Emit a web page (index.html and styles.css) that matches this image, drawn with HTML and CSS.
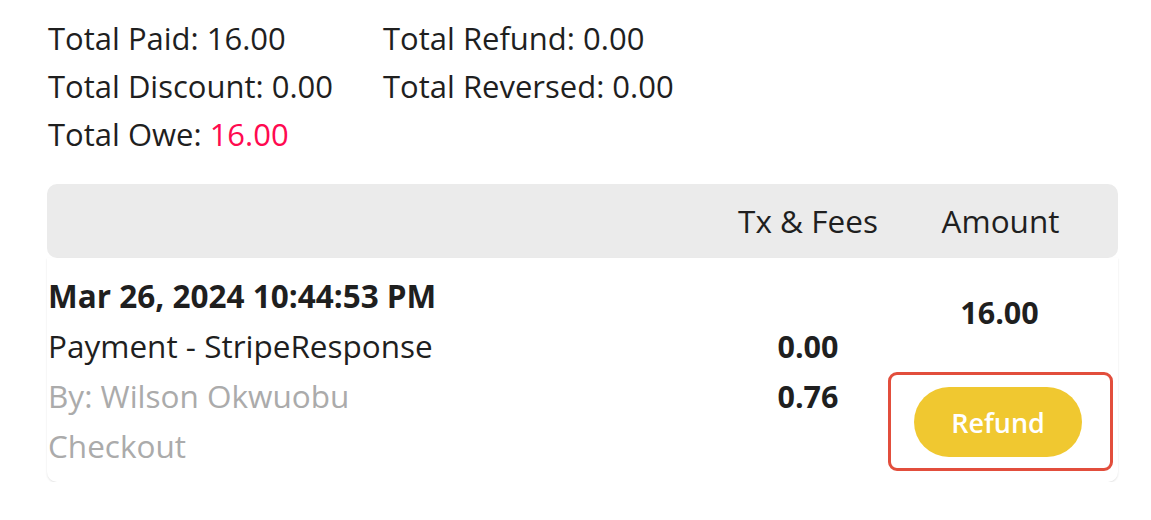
FILE: index.html
```html
<!DOCTYPE html>
<html>
<head>
<meta charset="utf-8">
<link rel="stylesheet" href="styles.css">
</head>
<body>
<div class="page">
  <div class="summary">
    <div class="item">Total Paid: 16.00</div>
    <div class="item">Total Refund: 0.00</div>
    <div class="item">Total Discount: 0.00</div>
    <div class="item">Total Reversed: 0.00</div>
    <div class="item">Total Owe: <span class="owe">16.00</span></div>
  </div>

  <div class="table">
    <div class="thead">
      <div class="th-desc"></div>
      <div class="th">Tx &amp; Fees</div>
      <div class="th">Amount</div>
    </div>
    <div class="trow">
      <div class="desc">
        <div class="date">Mar 26, 2024 10:44:53 PM</div>
        <div class="line">Payment - StripeResponse</div>
        <div class="line muted">By: Wilson Okwuobu</div>
        <div class="line muted">Checkout</div>
      </div>
      <div class="fees">
        <div class="num">0.00</div>
        <div class="num">0.76</div>
      </div>
      <div class="amount">
        <div class="num amt">16.00</div>
        <div class="action-box">
          <button class="refund">Refund</button>
        </div>
      </div>
    </div>
  </div>
</div>
</body>
</html>
```

FILE: styles.css
```css
html, body {
  margin: 0;
  padding: 0;
  background: #ffffff;
}

body {
  font-family: "Open Sans", "Noto Sans", sans-serif;
  color: #1f1f1f;
  font-size: 31px;
}

.page {
  padding: 14px 33px 0 47px;
}

.summary {
  display: grid;
  grid-template-columns: 335px auto;
  padding-left: 1px;
}

.item {
  line-height: 48px;
  height: 48px;
  white-space: nowrap;
}

.owe {
  color: #ff0a50;
}

.table {
  margin-top: 26px;
}

.thead,
.trow {
  display: grid;
  grid-template-columns: 1fr 160px 225px;
  padding-right: 5px;
}

.thead {
  background: #ebebeb;
  border-radius: 10px;
  height: 74px;
  align-items: center;
}

.th {
  text-align: center;
  line-height: 74px;
  font-size: 31.5px;
  white-space: nowrap;
}

.trow {
  padding-top: 13px;
  padding-bottom: 11px;
  border-radius: 0 0 10px 10px;
  box-shadow: 0 1px 2px rgba(0, 0, 0, 0.12);
}

.desc {
  padding-left: 1px;
  font-size: 31.5px;
}

.date {
  font-weight: 700;
  line-height: 50px;
}

.line {
  line-height: 50px;
}

.muted {
  color: #ababab;
}

.fees {
  align-self: center;
  display: flex;
  flex-direction: column;
  align-items: center;
}

.num {
  font-weight: 700;
  line-height: 50px;
  font-size: 30.5px;
}

.amount {
  display: flex;
  flex-direction: column;
  align-items: center;
  align-self: end;
}

.amt {
  margin-bottom: 35px;
  margin-left: -2px;
}

.action-box {
  box-sizing: border-box;
  width: 225px;
  height: 99px;
  border: 3px solid #e24e3c;
  border-radius: 9px;
  display: flex;
  align-items: center;
  justify-content: center;
}

.refund {
  width: 168px;
  height: 70px;
  border: none;
  border-radius: 35px;
  background: #f0c830;
  color: #ffffff;
  font-family: "Open Sans", "Noto Sans", sans-serif;
  font-weight: 600;
  font-size: 27px;
  padding: 0;
  margin-top: 1px;
  margin-left: -5px;
}
```
